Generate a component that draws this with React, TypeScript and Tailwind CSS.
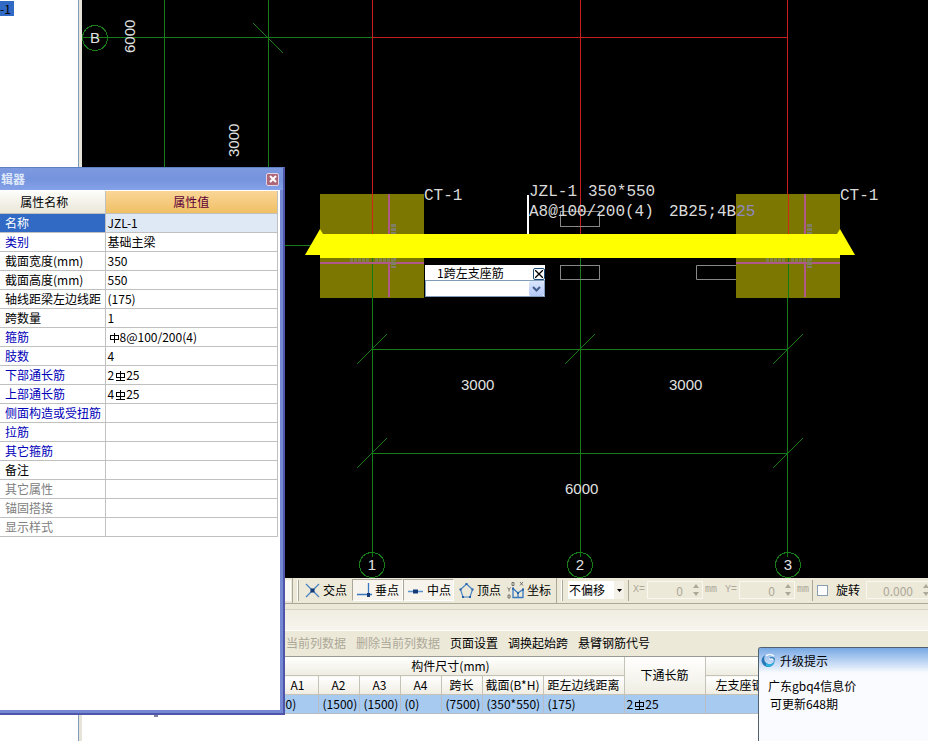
import { useState } from 'react';
import type { ReactNode } from 'react';

// steel grade symbol: plain for round bars, underlined for ribbed bars
function Rebar({ ribbed = false }: { ribbed?: boolean }) {
  return (
    <svg viewBox="0 0 12 12" className="inline-block h-3 w-3 align-[-2px]" fill="none" stroke="currentColor" shapeRendering="crispEdges">
      <path d={ribbed ? 'M2.5 3.5h8v4h-8zM6.5 1v9M2 10.5h9' : 'M2.5 3.5h8v4h-8zM6.5 1v10'} />
    </svg>
  );
}

type Property = { name: string; value?: ReactNode; tone: string };

const PROPERTIES: Property[] = [
  { name: '类别', value: '基础主梁', tone: 'text-[#0000b8]' },
  { name: '截面宽度(mm)', value: '350', tone: 'text-black' },
  { name: '截面高度(mm)', value: '550', tone: 'text-black' },
  { name: '轴线距梁左边线距', value: '(175)', tone: 'text-black' },
  { name: '跨数量', value: '1', tone: 'text-black' },
  { name: '箍筋', value: <><Rebar />8@100/200(4)</>, tone: 'text-[#0000b8]' },
  { name: '肢数', value: '4', tone: 'text-[#0000b8]' },
  { name: '下部通长筋', value: <>2<Rebar ribbed />25</>, tone: 'text-[#0000b8]' },
  { name: '上部通长筋', value: <>4<Rebar ribbed />25</>, tone: 'text-[#0000b8]' },
  { name: '侧面构造或受扭筋', tone: 'text-[#0000b8]' },
  { name: '拉筋', tone: 'text-[#0000b8]' },
  { name: '其它箍筋', tone: 'text-[#0000b8]' },
  { name: '备注', tone: 'text-black' },
  { name: '其它属性', tone: 'text-[#808080]' },
  { name: '锚固搭接', tone: 'text-[#808080]' },
  { name: '显示样式', tone: 'text-[#808080]' },
];

function PropertyEditor() {
  return (
    <section className="absolute top-[167px] bottom-[26px] left-0 z-10 flex w-[285px] flex-col border-t border-r-2 border-b-2 border-t-[#5f7fc4] border-r-[#4f55a8] border-b-[#4f55a8] bg-[#7488d4]">
      <header className="flex h-[22px] items-center justify-between bg-linear-to-b from-[#7d9ae0] via-[#7592dd] to-[#84a2e8] pr-1">
        <h2 className="pl-px font-bold text-[#dfe8fb]">辑器</h2>
        <button type="button" aria-label="关闭" className="flex h-[13px] w-[13px] items-center justify-center rounded-[2px] border border-[#e3d4e6] bg-[#ad6678]">
          <svg viewBox="0 0 8 8" className="h-2 w-2 shrink-0" stroke="white" strokeWidth="2">
            <path d="M1 1l6 6M7 1L1 7" />
          </svg>
        </button>
      </header>
      <div className="mr-[3px] mb-[3px] flex-1 bg-white pt-px">
        <table className="w-[278px] table-fixed border-collapse">
          <thead>
            <tr className="h-[22px]">
              <th className="w-[105px] border-r border-b border-[#c0c0c0] bg-linear-to-b from-[#fdfdfa] to-[#eae7d8] pr-4 font-normal">属性名称</th>
              <th className="border-r border-b border-[#c0c0c0] bg-linear-to-b from-[#f9d596] to-[#efbf63] font-normal text-[#5c0038]">属性值</th>
            </tr>
          </thead>
          <tbody>
            <tr className="h-[19px]">
              <td className="border-r border-b border-[#c0c0c0] bg-[#316ac5] pl-[5px] text-white">名称</td>
              <td className="border-r border-b border-[#c0c0c0] bg-[#dfe9f5] pl-[2px]">JZL-1</td>
            </tr>
            {PROPERTIES.map((p) => (
              <tr key={p.name} className="h-[19px]">
                <td className={`border-r border-b border-[#c0c0c0] pl-[5px] whitespace-nowrap ${p.tone}`}>{p.name}</td>
                <td className="border-r border-b border-[#c0c0c0] pl-[2px]">{p.value}</td>
              </tr>
            ))}
          </tbody>
        </table>
      </div>
    </section>
  );
}

function Footing({ x }: { x: number }) {
  return (
    <g transform={`translate(${x} 194)`}>
      <rect width="104" height="104" fill="#7b7700" />
      <path d="M52.5 0v40" stroke="#d02a10" />
      <path d="M52.5 64v40" stroke="#167a16" />
      <path d="M69 0v103M0 69h104" stroke="#b0588a" strokeWidth="2" />
      <path d="M73.5 30v10M73.5 64v10" stroke="#807d68" strokeWidth="5" strokeDasharray="3 1" />
      <path d="M30 66h20M55 66h20" stroke="#807d45" strokeWidth="4" strokeDasharray="3 1" />
    </g>
  );
}

const AXES = [
  { x: 372, label: '1' },
  { x: 580, label: '2' },
  { x: 788, label: '3' },
];

const TICKS = [
  [372, 349],
  [580, 349],
  [788, 349],
  [372, 453],
  [788, 453],
];

function Drawing() {
  return (
    <svg className="absolute inset-0 h-full w-full" fill="none">
      <g transform="translate(-82 0)">
        <g stroke="#187c18" shapeRendering="crispEdges">
          <path d="M82 37.5H372M164.5 0V200M268.5 0V200M285 245.5H320" />
          <path d="M372.5 298V557M580.5 258V557M787.5 298V557" />
          <path d="M372 349.5H788M372 453.5H788" />
          <path d="M253 23l30 30" />
          {TICKS.map(([x, y]) => (
            <path key={`${x}-${y}`} d={`M${x - 15} ${y + 15}l30-30`} />
          ))}
          <circle cx="95" cy="38" r="12.5" />
          {AXES.map((a) => (
            <circle key={a.label} cx={a.x} cy="565" r="12.5" />
          ))}
        </g>
        <path d="M372 37.5H788M372.5 0V194M580.5 0V234M787.5 0V194" stroke="#c81e1e" shapeRendering="crispEdges" />

        <Footing x={320} />
        <Footing x={736} />
        <path d="M305 255l15-26 3 5H837l3-5 15 26H840v3H320v-3z" fill="#ffff00" />
        <path d="M528 195v39" stroke="#ffffff" strokeWidth="2" />
        <g stroke="#888888">
          <rect x="560.5" y="211.5" width="39" height="15" />
          <rect x="560.5" y="265.5" width="39" height="14" />
          <path d="M736 265.5H696.5v14H736" />
        </g>

        <g fill="#e2e2e2" className="font-['Liberation_Sans'] text-[15px]">
          <text x="461" y="390">3000</text>
          <text x="669" y="390">3000</text>
          <text x="565" y="494">6000</text>
          <text transform="translate(135 53) rotate(-90)">6000</text>
          <text transform="translate(239 157) rotate(-90)">3000</text>
          <text x="95" y="43" textAnchor="middle">B</text>
          {AXES.map((a) => (
            <text key={a.label} x={a.x} y="570" textAnchor="middle">{a.label}</text>
          ))}
        </g>
        <g fill="#dadada" className="font-['Liberation_Mono'] text-[16px]">
          <text x="424" y="200">CT-1</text>
          <text x="840" y="200">CT-1</text>
          <text x="529" y="196">JZL-1</text>
          <text x="588" y="196">350*550</text>
          <text x="529" y="216">A8@100/200(4)</text>
          <text x="669" y="216">2B25;4B<tspan fill="#8f88c0">25</tspan></text>
        </g>
      </g>
    </svg>
  );
}

// in-place editor that floats over the beam
function SupportBarInput() {
  return (
    <div className="absolute top-[265px] left-[343px] w-[120px] bg-white">
      <div className="flex h-[15px] items-center justify-between pl-3">
        <label htmlFor="support-bar" className="leading-[14px]">1跨左支座筋</label>
        <button type="button" aria-label="关闭" className="mt-[2px] flex h-[12px] w-[12px] items-center justify-center rounded-[2px] border border-[#1c4a78] bg-white">
          <svg viewBox="0 0 8 8" className="h-2 w-2 shrink-0" stroke="black" strokeWidth="1.3">
            <path d="M0 0l8 8M8 0L0 8" />
          </svg>
        </button>
      </div>
      <div className="relative h-[17px] border border-[#7f9db9]">
        <select id="support-bar" className="h-full w-full appearance-none bg-white outline-none" />
        <span className="pointer-events-none absolute top-0 right-0 flex h-[15px] w-[15px] items-center justify-center rounded-[2px] bg-linear-to-b from-[#dbe6fd] to-[#b3c9f6]">
          <svg viewBox="0 0 9 6" className="h-[6px] w-[9px]" fill="none" stroke="#435d8c" strokeWidth="2">
            <path d="M1 1l3.500 3.500L8 1" />
          </svg>
        </span>
      </div>
    </div>
  );
}

const SNAPS = [
  {
    label: '交点',
    box: 'w-[50px] gap-[2px] pl-px',
    icon: (
      <>
        <path d="M2 2l13 13M15 2L2 15" stroke="#4a84c4" strokeWidth="1.3" />
        <rect x="6.5" y="6.5" width="4" height="4" fill="#143a78" />
      </>
    ),
  },
  {
    label: '垂点',
    on: true,
    box: 'w-[51px] gap-[2px] pl-[3px]',
    icon: (
      <>
        <path d="M1 12.5h15M12.500 1v14" stroke="#3878c0" strokeWidth="1.3" />
        <rect x="11" y="11" width="3" height="4" fill="#143a78" />
      </>
    ),
  },
  {
    label: '中点',
    on: true,
    box: 'w-[51px] gap-[3px] pl-[3px]',
    icon: (
      <>
        <path d="M1 9.5h15" stroke="#5a94d0" strokeWidth="1.5" />
        <rect x="6" y="7.5" width="5" height="4" fill="#143a78" />
      </>
    ),
  },
  {
    label: '顶点',
    box: 'w-[50px] gap-[2px] pl-[3px]',
    icon: (
      <>
        <path d="M8.500 2l6 5.500-2.500 7.500H5L2.500 7.500z" stroke="#4a84c4" strokeWidth="1.2" />
        <path d="M7.500 1h2v2h-2zM1.500 6.500h2v2h-2zM13.500 6.500h2v2h-2zM4 14h2v2H4zM11 14h2v2h-2z" fill="#2860a8" />
      </>
    ),
  },
  {
    label: '坐标',
    box: 'w-[50px] gap-[3px] pl-[2px]',
    icon: (
      <>
        <path d="M6 6v9.500h10.500M6 6.500l5 4.500 5-3.500v8M11 11v4" stroke="#3878c0" strokeWidth="1.3" />
        <path d="M5 0.500h2v3H5zM13 0l3 3.500M16 0l-3 3.500M0.500 5.500L2 7.500 3.500 5.500M2 7.500V9.500M1 13h2v3H1z" stroke="#555555" strokeWidth="0.8" />
        <path d="M5 5.500h2v2H5zM15 6.500h2v2h-2zM10 10h2v2h-2z" fill="#2860a8" />
      </>
    ),
  },
];

function Grip() {
  return (
    <>
      <span className="h-[25px] w-px shrink-0 bg-[#aca899]" />
      <span className="ml-1 h-[21px] w-[2px] shrink-0 border-r border-[#aca899] bg-white" />
    </>
  );
}

function Spinner({ label, value, box }: { label: string; value: string; box: string }) {
  return (
    <span className={`flex h-[18px] shrink-0 items-center border border-[#f8f7f0] bg-[#ece9d8] ${box}`}>
      <input
        aria-label={label}
        disabled
        defaultValue={value}
        className="h-full w-0 flex-1 pr-[10px] text-right text-[#aca899]"
      />
      <svg viewBox="0 0 6 12" className="mr-[3px] h-3 w-[6px] shrink-0" fill="#aca899">
        <path d="M3 0l3 4H0zM3 12l3-4H0z" />
      </svg>
    </span>
  );
}

function SnapToolbar() {
  const [offset, setOffset] = useState('不偏移');
  const [rotate, setRotate] = useState(false);
  const unit = "shrink-0 font-['Liberation_Mono'] text-[10px] text-[#aca899]";

  return (
    <div className="flex h-[26px] items-center overflow-hidden border-b border-[#aca899] bg-[#ece9d8] pl-[203px] whitespace-nowrap">
      <span className="mr-px h-[21px] w-[6px] shrink-0 border-r border-white bg-[#f9f8f3]" />
      <Grip />
      <div className="ml-[3px] flex">
        {SNAPS.map((s) => (
          <button
            key={s.label}
            type="button"
            aria-pressed={!!s.on}
            className={`flex h-[22px] shrink-0 items-center border ${s.box} ${
              s.on ? 'border-t-[#aca899] border-r-white border-b-white border-l-[#aca899] bg-[#f6f4ec]' : 'border-transparent'
            }`}
          >
            <svg viewBox="0 0 17 17" className="h-[17px] w-[17px] shrink-0" fill="none">
              {s.icon}
            </svg>
            {s.label}
          </button>
        ))}
      </div>
      <span className="w-[2px] shrink-0" />
      <Grip />
      <div className="relative ml-[5px] h-[18px] w-[56px] shrink-0 bg-white">
        <select
          aria-label="偏移方式"
          value={offset}
          onChange={(e) => setOffset(e.target.value)}
          className="h-full w-full appearance-none pl-px leading-[16px] outline-none"
        >
          <option>不偏移</option>
        </select>
        <span className="pointer-events-none absolute top-0 right-0 flex h-full w-[10px] items-center justify-center bg-[#f3f1e8]">
          <svg viewBox="0 0 5 3" className="h-[3px] w-[5px]"><path d="M0 0h5L2.500 3z" /></svg>
        </span>
      </div>
      <span className="mx-1 h-[21px] w-px shrink-0 bg-[#aca899]" />
      <span className={`w-[14px] ${unit}`}>X=</span>
      <Spinner label="X" value="0" box="w-[56px]" />
      <span className={`w-[22px] pl-[2px] ${unit}`}>mm</span>
      <span className={`w-[14px] ${unit}`}>Y=</span>
      <Spinner label="Y" value="0" box="w-[56px]" />
      <span className={`w-[17px] pl-[2px] ${unit}`}>mm</span>
      <span className="mr-1 h-[21px] w-px shrink-0 bg-[#aca899]" />
      <label className="flex shrink-0 items-center gap-2">
        <input
          type="checkbox"
          checked={rotate}
          onChange={(e) => setRotate(e.target.checked)}
          className="h-[11px] w-[11px] appearance-none border border-[#8a9fb0] bg-white checked:bg-[#21a121]"
        />
        旋转
      </label>
      <Spinner label="旋转角度" value="0.000" box="ml-[6px] w-[67px]" />
    </div>
  );
}

const SIZE_COLUMNS = ['A1', 'A2', 'A3', 'A4', '跨长', '截面(B*H)', '距左边线距离'];
const SIZE_VALUES = ['(0)', '(1500)', '(1500)', '(0)', '(7500)', '(350*550)', '(175)'];

function SpanTable() {
  const head = 'border-r border-b border-[#c5c2b8] bg-linear-to-b from-white to-[#efede2] font-normal whitespace-nowrap';

  return (
    <table className="w-full table-fixed border-collapse">
      <colgroup>
        <col className="w-[195px]" />
        <col className="w-[41px]" />
        <col className="w-[41px]" />
        <col className="w-[41px]" />
        <col className="w-[41px]" />
        <col className="w-[41px]" />
        <col className="w-[61px]" />
        <col className="w-[81px]" />
        <col className="w-[81px]" />
        <col className="w-[81px]" />
        <col />
      </colgroup>
      <thead>
        <tr className="h-[19px]">
          <th rowSpan={2} className={head} />
          <th colSpan={7} className={head}>构件尺寸(mm)</th>
          <th rowSpan={2} className={head}>下通长筋</th>
          <th colSpan={2} className={head} />
        </tr>
        <tr className="h-[19px]">
          {SIZE_COLUMNS.map((c) => (
            <th key={c} className={head}>{c}</th>
          ))}
          <th className={head}>左支座钢筋</th>
          <th className={head} />
        </tr>
      </thead>
      <tbody>
        <tr className="h-[19px] bg-[#a6caf0]">
          <td className="border-r border-b border-[#b8bcc4]" />
          {SIZE_VALUES.map((v, i) => (
            <td key={i} className="border-r border-b border-[#b8bcc4] pl-1 whitespace-nowrap">{v}</td>
          ))}
          <td className="border-r border-b border-[#b8bcc4] pl-[2px]">2<Rebar ribbed />25</td>
          <td className="border-r border-b border-[#b8bcc4]" />
          <td className="border-b border-[#b8bcc4]" />
        </tr>
      </tbody>
    </table>
  );
}

function UpdateNotice() {
  return (
    <aside className="absolute right-0 bottom-0 z-20 h-[94px] w-[170px] rounded-tl-[3px] border-t border-l border-[#50606e] bg-[#fafbfe]">
      <header className="flex h-[25px] items-center gap-1 rounded-tl-[2px] bg-linear-to-b from-[#76a8e4] to-[#fafbfe] pl-[2px]">
        <svg viewBox="0 0 15 15" className="h-[15px] w-[15px]" fill="none">
          <path d="M4.500 2C1.500 3.500 0 6 .8 9c1 3.600 4 5.300 7 5 3.500-.4 5.700-3 5.700-6.500-1 2.500-3 4-5.200 3.700C5 10.800 3 8 3.200 5 3.300 3.800 3.800 2.800 4.500 2z" fill="#2a78b8" />
          <path d="M5 13.200c4 1.800 8-.7 8.500-5.700-1 2.500-3 4-5.200 3.700-1.300-.2-2.300-.7-3.300-1.500z" fill="#2cb4de" />
          <path d="M5 3c2-2 5.500-2 8 0M8.500 6.500c1-1 2.500-1 4 .2" stroke="#f4faff" strokeWidth="1.6" />
          <path d="M9 5c1.500-.6 3-.3 4.200.6v2" stroke="#2a78b8" strokeWidth="1.2" />
        </svg>
        <h2>升级提示</h2>
      </header>
      <p className="mt-1 pl-[9px] leading-[18px]">广东gbq4信息价</p>
      <p className="pl-[11px] leading-[18px]">可更新648期</p>
    </aside>
  );
}

export default function App() {
  return (
    <div className="relative flex h-screen overflow-hidden bg-white font-['Noto_Sans_CJK_SC',sans-serif] text-[12px] leading-[16px] text-black">
      <nav className="flex w-[82px] shrink-0 flex-col items-start border-r-[3px] border-[#e6e4d8] pt-px">
        <a href="#jzl-1" className="h-[15px] w-[14px] bg-[#316ac5] leading-[15px] text-black">-1</a>
        <span className="-mt-4 w-[79px] flex-1 border-r border-[#7f9db9]" />
      </nav>

      <main className="flex min-w-0 flex-1 flex-col">
        <div className="relative flex-1 overflow-hidden bg-black">
          <Drawing />
          <SupportBarInput />
        </div>

        <SnapToolbar />
        <div className="h-[6px] border-b border-[#d5d2c4] bg-[#ece9d8]" />
        <div className="h-[21px] border-b border-white bg-linear-to-b from-[#f0eee2] to-[#f6f4ec]" />
        <div className="flex h-[26px] items-center gap-[10px] border-b border-[#9a9a94] bg-[#ece9d8] pl-[204px] whitespace-nowrap">
          <button type="button" disabled className="text-[#aca899]">当前列数据</button>
          <button type="button" disabled className="text-[#aca899]">删除当前列数据</button>
          <button type="button">页面设置</button>
          <button type="button">调换起始跨</button>
          <button type="button">悬臂钢筋代号</button>
        </div>
        <SpanTable />
        <div className="h-[27px] bg-white pt-px pl-[72px]">
          <div className="h-[2px] w-1 bg-[#8080a0]" />
        </div>
      </main>

      <PropertyEditor />
      <UpdateNotice />
    </div>
  );
}
